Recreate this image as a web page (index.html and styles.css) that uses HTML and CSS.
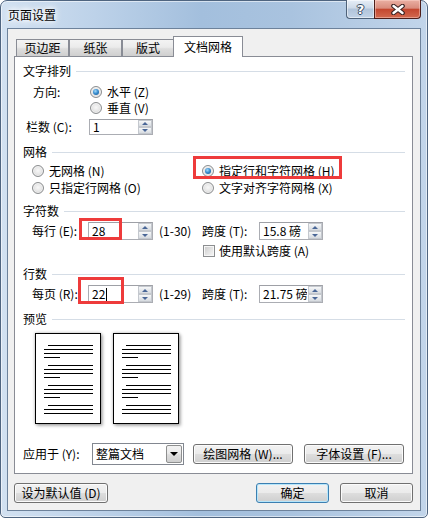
FILE: index.html
```html
<!DOCTYPE html>
<html lang="zh-CN">
<head>
<meta charset="utf-8">
<title>页面设置</title>
<link rel="stylesheet" href="styles.css">
</head>
<body>
<div class="window">
  <div class="titlebar">
    <span class="title">页面设置</span>
    <div class="caption">
      <div class="cap-help"><span>?</span></div>
      <div class="cap-close">
        <svg width="14" height="11" viewBox="0 0 14 11">
          <path d="M2.5 2 L11.5 9 M11.5 2 L2.5 9" stroke="#3a2222" stroke-width="4.6" stroke-linecap="round"/>
          <path d="M2.5 2 L11.5 9 M11.5 2 L2.5 9" stroke="#ffffff" stroke-width="2.4" stroke-linecap="round"/>
        </svg>
      </div>
    </div>
  </div>
  <div class="dialog">
    <div class="tabs">
      <div class="tab t1">页边距</div>
      <div class="tab t2">纸张</div>
      <div class="tab t3">版式</div>
      <div class="tab active">文档网格</div>
    </div>
    <div class="panel">
      <div class="sec sec-first"><span>文字排列</span><i></i></div>
      <div class="row row-dir">
        <span class="lbl lbl-dir">方向:</span>
        <span class="opt"><span class="radio on"></span>水平 (Z)</span>
      </div>
      <div class="row row-vert">
        <span class="opt"><span class="radio"></span>垂直 (V)</span>
      </div>
      <div class="row row-cols">
        <span class="lbl lbl-cols">栏数 (C):</span>
        <div class="spin spin-cols"><span class="val">1</span><div class="spb"><i class="up"></i><i class="dn"></i></div></div>
      </div>

      <div class="sec sec-grid"><span>网格</span><i></i></div>
      <div class="row grid2 row-g1">
        <span class="opt"><span class="radio"></span>无网格 (N)</span>
        <span class="opt"><span class="radio on"></span>指定行和字符网格 (H)</span>
        <span class="redbox rb1"></span>
      </div>
      <div class="row grid2 row-g2">
        <span class="opt"><span class="radio"></span>只指定行网格 (O)</span>
        <span class="opt"><span class="radio"></span>文字对齐字符网格 (X)</span>
      </div>

      <div class="sec sec-mid"><span>字符数</span><i></i></div>
      <div class="row row-num">
        <span class="lbl lbl-num">每行 (E):</span>
        <div class="spin spin-num"><span class="val">28</span><div class="spb"><i class="up"></i><i class="dn"></i></div></div>
        <span class="range">(1-30)</span>
        <span class="lbl lbl-pitch">跨度 (T):</span>
        <div class="spin spin-pitch"><span class="val">15.8 磅</span><div class="spb"><i class="up"></i><i class="dn"></i></div></div>
        <span class="redbox rb2"></span>
      </div>
      <div class="row row-chk">
        <span class="opt"><span class="check"></span>使用默认跨度 (A)</span>
      </div>

      <div class="sec sec-mid"><span>行数</span><i></i></div>
      <div class="row row-num">
        <span class="lbl lbl-num">每页 (R):</span>
        <div class="spin spin-num"><span class="val">22<span class="caret"></span></span><div class="spb"><i class="up"></i><i class="dn"></i></div></div>
        <span class="range">(1-29)</span>
        <span class="lbl lbl-pitch">跨度 (T):</span>
        <div class="spin spin-pitch"><span class="val">21.75 磅</span><div class="spb"><i class="up"></i><i class="dn"></i></div></div>
        <span class="redbox rb3"></span>
      </div>

      <div class="sec sec-prev"><span>预览</span><i></i></div>
      <div class="pages">
        <svg class="page" width="66" height="91" viewBox="0 0 66 91">
          <rect x="0.5" y="0.5" width="65" height="90" fill="#fff" stroke="#000"/>
          <path stroke="#000" stroke-width="1" fill="none" d="M13 12.5H58M9 16.5H58M9 20.5H58M9 24.5H25M13 32.5H58M9 36.5H58M9 40.5H58M9 44.5H25M13 52.5H58M9 56.5H58M9 60.5H58M9 64.5H25M13 72.5H58M9 76.5H58M9 80.5H58"/>
        </svg>
        <svg class="page" width="66" height="91" viewBox="0 0 66 91">
          <rect x="0.5" y="0.5" width="65" height="90" fill="#fff" stroke="#000"/>
          <path stroke="#000" stroke-width="1" fill="none" d="M13 12.5H58M9 16.5H58M9 20.5H58M9 24.5H25M13 32.5H58M9 36.5H58M9 40.5H58M9 44.5H25M13 52.5H58M9 56.5H58M9 60.5H58M9 64.5H25M13 72.5H58M9 76.5H58M9 80.5H58"/>
        </svg>
      </div>

      <div class="row row-apply">
        <span class="lbl lbl-apply">应用于 (Y):</span>
        <div class="select"><span class="sel-val">整篇文档</span><span class="sel-btn"><i></i></span></div>
        <div class="btn btn-draw">绘图网格 (W)...</div>
        <div class="btn btn-font">字体设置 (F)...</div>
      </div>
    </div>
    <div class="footer">
      <div class="btn btn-default">设为默认值 (D)</div>
      <div class="footer-right">
        <div class="btn btn-ok">确定</div>
        <div class="btn btn-cancel">取消</div>
      </div>
    </div>
  </div>
</div>
</body>
</html>
```
FILE: styles.css
```css
* { box-sizing: border-box; }
html, body { margin: 0; padding: 0; }
body {
  width: 428px;
  height: 518px;
  overflow: hidden;
  font-family: "Noto Sans CJK SC", "Noto Sans", sans-serif;
  font-size: 12px;
  line-height: 16px;
  color: #000;
  background: #fff;
}

.window {
  width: 428px;
  height: 518px;
  display: flex;
  flex-direction: column;
  padding: 0 6px 6px;
  border: 1px solid #4f6580;
  border-radius: 7px 7px 5px 5px;
  background: linear-gradient(90deg, #d2e1f1 0%, #bdd2e9 22%, #a3bfdd 47%, #a9c3df 68%, #c2d5ea 100%);
  box-shadow: inset 0 0 0 1px rgba(255, 255, 255, 0.55);
}

.titlebar {
  height: 27px;
  flex: none;
  display: flex;
  justify-content: space-between;
  align-items: flex-start;
}
.title {
  margin: 7px 0 0 1px;
  line-height: 14px;
  text-shadow: 0 0 4px #fff, 0 0 7px #fff, 0 0 9px rgba(255, 255, 255, 0.9);
}
.caption { display: flex; margin-top: -1px; }
.cap-help {
  width: 28px;
  height: 19px;
  border: 1px solid #4e6279;
  border-top: none;
  border-right: none;
  border-radius: 0 0 0 4px;
  background: linear-gradient(#e6eef7 0%, #cdd9e7 45%, #b1c4da 50%, #c2d3e6 100%);
  box-shadow: inset 0 0 0 1px rgba(255, 255, 255, 0.5);
  display: flex;
  align-items: center;
  justify-content: center;
}
.cap-help span {
  font-family: "DejaVu Sans", sans-serif;
  font-weight: bold;
  font-size: 13px;
  line-height: 13px;
  color: #fff;
  text-shadow: -1px 0 #36485e, 1px 0 #36485e, 0 -1px #36485e, 0 1px #36485e;
}
.cap-close {
  width: 47px;
  height: 19px;
  border: 1px solid #4d1e1a;
  border-top: none;
  border-radius: 0 0 4px 0;
  background: linear-gradient(#eab0a3 0%, #d98c7d 45%, #c4472f 52%, #d2694f 100%);
  box-shadow: inset 0 0 0 1px rgba(255, 220, 210, 0.45);
  display: flex;
  align-items: center;
  justify-content: center;
}

.dialog {
  flex: 1;
  background: #f0f0f0;
  border: 1px solid #6d829b;
  padding: 0 7px 0 6px;
  display: flex;
  flex-direction: column;
}

.tabs {
  display: flex;
  flex: none;
  height: 21px;
  margin-top: 7px;
  margin-bottom: -1px;
  padding-left: 2px;
}
.tab {
  height: 17px;
  margin-top: 3px;
  border: 1px solid #898c95;
  border-bottom: none;
  background: linear-gradient(#f3f3f3 0%, #ebebeb 45%, #dddddd 55%, #cfcfcf 100%);
  display: flex;
  align-items: center;
  justify-content: center;
  line-height: 14px;
}
.t1 { width: 53px; }
.t2 { width: 53px; }
.t3 { width: 52px; }
.tab.active {
  width: 70px;
  height: 21px;
  margin-top: 0;
  margin-left: -1px;
  padding-bottom: 1px;
  background: #fff;
  position: relative;
  z-index: 1;
}

.panel {
  height: 418px;
  flex: none;
  border: 1px solid #898c95;
  background: #fff;
  padding: 0 7px 8px 8px;
  display: flex;
  flex-direction: column;
}

.sec {
  display: flex;
  align-items: center;
  height: 16px;
  flex: none;
}
.sec i {
  flex: 1;
  height: 1px;
  margin-left: 5px;
  background: #d5dde6;
}
.sec-first { margin-top: 6px; }
.sec-grid { margin-top: 9px; }
.sec-mid { margin-top: 7px; }
.sec-prev { margin-top: 8px; }

.row {
  display: flex;
  align-items: center;
  height: 16px;
  flex: none;
  margin-left: 9px;
  position: relative;
  white-space: nowrap;
}
.row-dir { margin-top: 5px; }
.lbl-dir { width: 57px; margin-left: 1px; }
.row-vert { padding-left: 58px; }
.row-cols { margin-top: 3px; margin-left: 3px; }
.lbl-cols { width: 63px; }

.opt { display: flex; align-items: center; gap: 5px; }
.radio {
  width: 12px;
  height: 12px;
  border-radius: 50%;
  border: 1px solid #8c8e90;
  background: radial-gradient(circle at 50% 45%, #f8f8f8 0%, #e8e8e8 45%, #c6c6c6 100%);
  box-shadow: inset 0 0 0 1px rgba(255, 255, 255, 0.6);
  display: flex;
  align-items: center;
  justify-content: center;
  flex: none;
}
.radio.on::after {
  content: "";
  width: 6px;
  height: 6px;
  border-radius: 50%;
  background: radial-gradient(circle at 40% 35%, #a6dcfb 0%, #3b8fd0 45%, #0f4f8c 100%);
}
.check {
  width: 12px;
  height: 12px;
  border: 1px solid #8c8e90;
  background: linear-gradient(135deg, #c8c8c8 0%, #e2e2e2 50%, #f7f7f7 100%);
  box-shadow: inset 0 0 0 1px #f6f6f6;
  flex: none;
}

.grid2 { display: grid; grid-template-columns: 170px auto; }
.row-g1 { margin-top: 3px; }
.row-g2 { margin-top: 1px; }

.row-num { height: 18px; margin-top: 3px; }
.lbl-num { width: 56px; }
.range { width: 49px; padding-left: 6px; }
.lbl-pitch { width: 57px; }
.row-chk { margin-top: 3px; padding-left: 171px; }
.row-chk .opt { gap: 4px; }

.spin {
  display: flex;
  height: 18px;
  border: 1px solid #abadb3;
  border-top-color: #9ea0a6;
  background: #fff;
  overflow: hidden;
  flex: none;
}
.spin-cols { width: 64px; height: 16px; overflow: visible; }
.spin-cols .val { line-height: 14px; overflow: visible; }
.spin-num { width: 65px; }
.spin-pitch { width: 64px; }
.val {
  flex: 1;
  padding-left: 3px;
  overflow: hidden;
  white-space: nowrap;
  display: flex;
  align-items: center;
}
.caret {
  display: inline-block;
  width: 1px;
  height: 13px;
  background: #000;
  margin-left: 1px;
}
.spb {
  width: 15px;
  flex: none;
  display: flex;
  flex-direction: column;
  background: #fff;
  padding: 0 0 0 1px;
}
.spb i {
  flex: 1;
  border: 1px solid #c4c8ce;
  background: linear-gradient(#f7f8f9 0%, #e6e9ec 50%, #d7dbe0 100%);
  display: flex;
  align-items: center;
  justify-content: center;
}
.spb i.up::after {
  content: "";
  border-left: 3px solid transparent;
  border-right: 3px solid transparent;
  border-bottom: 3px solid #4a6797;
}
.spb i.dn::after {
  content: "";
  border-left: 3px solid transparent;
  border-right: 3px solid transparent;
  border-top: 3px solid #4a6797;
}

.redbox {
  position: absolute;
  border: 3px solid #ee3b3b;
  pointer-events: none;
}
.rb1 { left: 161px; top: -7px; width: 149px; height: 23px; }
.rb2 { left: 47px; top: -4px; width: 43px; height: 22px; }
.rb3 { left: 46px; top: -8px; width: 46px; height: 27px; }

.pages {
  display: flex;
  gap: 12px;
  margin-top: 6px;
  margin-left: 12px;
  flex: none;
}
.page {
  display: block;
  box-shadow: 0 0 3px rgba(0, 0, 0, 0.3), 2px 2px 3px rgba(0, 0, 0, 0.25);
}

.row-apply {
  margin-top: auto;
  margin-left: 0;
  height: 22px;
}
.lbl-apply { width: 69px; }
.select {
  width: 92px;
  height: 22px;
  border: 1px solid #828790;
  background: #fff;
  display: flex;
  align-items: center;
  margin-right: 9px;
}
.sel-val { flex: 1; padding-left: 3px; }
.sel-btn {
  width: 16px;
  height: 18px;
  margin: 0 1px;
  border: 1px solid #8e8f8f;
  border-radius: 2px;
  background: linear-gradient(#f2f2f2 0%, #ebebeb 45%, #dddddd 55%, #cfcfcf 100%);
  display: flex;
  align-items: center;
  justify-content: center;
}
.sel-btn i {
  border-left: 4px solid transparent;
  border-right: 4px solid transparent;
  border-top: 4px solid #000;
}

.btn {
  height: 20px;
  border: 1px solid #707070;
  border-radius: 3px;
  background: linear-gradient(#f2f2f2 0%, #ebebeb 48%, #dddddd 52%, #cfcfcf 100%);
  box-shadow: inset 0 0 0 1px #fbfbfb;
  display: flex;
  align-items: center;
  justify-content: center;
  white-space: nowrap;
  flex: none;
}
.btn-draw { width: 100px; margin-right: 11px; }
.btn-font { width: 100px; }

.footer {
  display: flex;
  justify-content: space-between;
  margin-top: 9px;
  flex: none;
}
.footer-right { display: flex; gap: 11px; }
.btn-default { width: 94px; }
.btn-ok {
  width: 73px;
  border-color: #3c7fb1;
  box-shadow: inset 0 0 0 1px #b6e6fb;
}
.btn-cancel { width: 73px; }
```
